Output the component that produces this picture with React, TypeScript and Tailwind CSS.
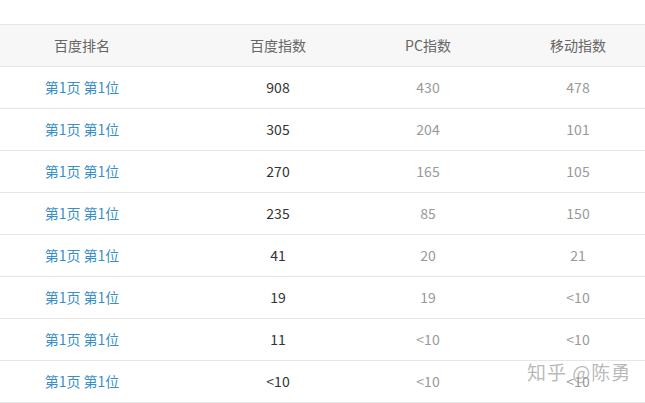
import React from "react";

const rows = [
  ["908", "430", "478"],
  ["305", "204", "101"],
  ["270", "165", "105"],
  ["235", "85", "150"],
  ["41", "20", "21"],
  ["19", "19", "<10"],
  ["11", "<10", "<10"],
  ["<10", "<10", "<10"],
];

const grid = "grid grid-cols-[164px_228px_72px_228px] w-[692px]";

export default function App() {
  return (
    <div
      className="relative w-[645px] h-[403px] overflow-hidden bg-white text-[14px]"
      style={{ fontFamily: '"Noto Sans CJK SC", "Noto Sans", sans-serif' }}
    >
      <div className="h-[24px]" />
      <div className={`${grid} h-[43px] items-center bg-[#f7f7f7] border-t border-b border-[#e6e6e6] text-[#666]`}>
        <div className="text-center">百度排名</div>
        <div className="text-center">百度指数</div>
        <div className="text-center">PC指数</div>
        <div className="text-center">移动指数</div>
      </div>
      {rows.map((r, i) => (
        <div key={i} className={`${grid} h-[42px] items-center border-b border-[#e6e6e6]`}>
          <div className="text-center text-[#3a8fc7]">第1页 第1位</div>
          <div className="text-center text-[#333]">{r[0]}</div>
          <div className="text-center text-[#999]">{r[1]}</div>
          <div className="text-center text-[#999]">{r[2]}</div>
        </div>
      ))}
      <div className="absolute left-[527px] top-[358px] text-[19px] text-[#9a9a9a]/70 tracking-[1px]">
        知乎 @陈勇
      </div>
    </div>
  );
}
